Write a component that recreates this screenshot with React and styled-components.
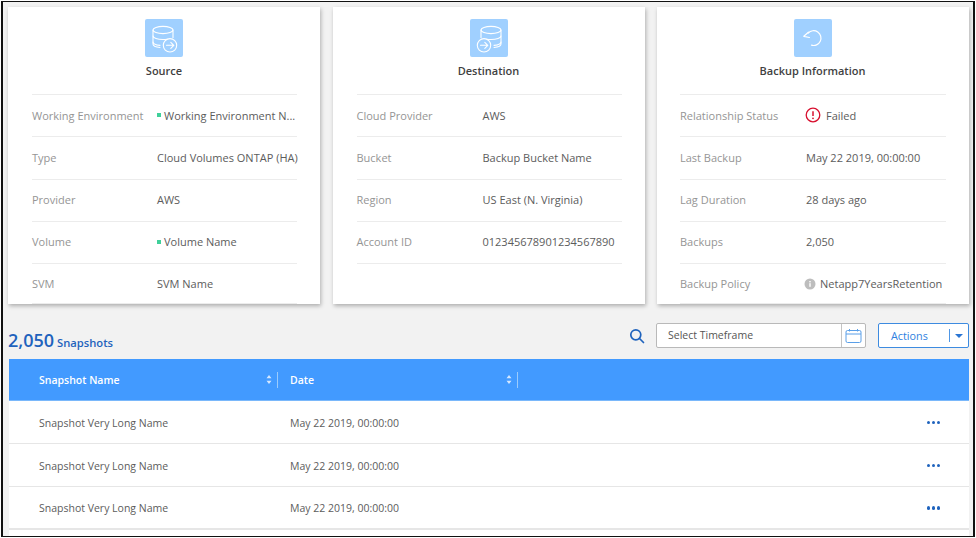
import React from 'react';
import styled, { createGlobalStyle } from 'styled-components';

const Global = createGlobalStyle`
  html, body { margin: 0; padding: 0; background: #fff; }
  * { box-sizing: border-box; }
`;

const Page = styled.div`
  width: 976px;
  height: 538px;
  padding: 1px;
  background: #fff;
  overflow: hidden;
  font-family: "Open Sans", "Liberation Sans", sans-serif;
`;

const Frame = styled.div`
  height: 536px;
  border: solid #111;
  border-width: 1px 2px 1px 2px;
  background: #f2f2f2;
  padding: 5px 4px 0 5px;
  overflow: hidden;
`;

const Cards = styled.div`
  display: grid;
  grid-template-columns: repeat(3, 312px);
  justify-content: space-between;
`;

const Card = styled.section`
  height: 297px;
  background: #fff;
  box-shadow: 1px 2px 4px rgba(0, 0, 0, 0.28);
  padding: 12px 24px 0 ${p => p.$pad}px;
  display: flex;
  flex-direction: column;
  align-items: stretch;
  overflow: hidden;
`;

const IconTile = styled.div`
  width: 38px;
  height: 38px;
  border-radius: 2px;
  background: #a0d0ff;
  align-self: center;
  display: flex;
  align-items: center;
  justify-content: center;
`;

const CardTitle = styled.h3`
  margin: 4px 0 0;
  height: 20px;
  line-height: 20px;
  font-size: 11px;
  font-weight: 600;
  color: #3f3f3f;
  text-align: center;
`;

const Rows = styled.div`
  margin: 13px -1px 0 0;
  border-top: 1px solid #ececec;
`;

const Row = styled.div`
  height: 42.25px;
  padding-bottom: 1px;
  display: grid;
  grid-template-columns: ${p => p.$labelWidth}px 1fr;
  align-items: center;
  border-bottom: 1px solid #ececec;
  font-size: 11px;
  &:nth-child(5) {
    height: 40px;
    padding-bottom: 0;
  }
`;

const Label = styled.span`
  color: #959595;
  white-space: nowrap;
`;

const Value = styled.span`
  color: #5c5c5c;
  white-space: nowrap;
  display: flex;
  align-items: center;
  min-width: 0;
`;

const Dot = styled.i`
  width: 4px;
  height: 4px;
  margin-right: 3px;
  flex: none;
  background: #3fd09a;
`;

const StatusGap = styled.span`
  display: flex;
  margin: 0 ${p => p.$gap}px 0 ${p => p.$shift}px;
  flex: none;
`;

const Toolbar = styled.div`
  height: 36px;
  margin-top: 19px;
  display: flex;
  align-items: flex-start;
`;

const Count = styled.div`
  margin-top: 4px;
  color: #1f63bd;
  font-size: 11.2px;
  font-weight: 600;
  line-height: 26px;
  white-space: nowrap;
`;

const CountNumber = styled.span`
  font-size: 18px;
  font-weight: 600;
  margin-right: 3px;
`;

const Controls = styled.div`
  margin-left: auto;
  display: flex;
  align-items: center;
`;

const SearchButton = styled.span`
  display: flex;
  margin-right: 11px;
`;

const Picker = styled.div`
  width: 210px;
  height: 25px;
  background: #fff;
  border: 1px solid #b9b9b9;
  border-radius: 2px;
  display: flex;
  align-items: center;
`;

const PickerText = styled.span`
  flex: 1;
  padding: 0 0 1px 11px;
  font-size: 10.5px;
  color: #555;
`;

const PickerIcon = styled.span`
  width: 24px;
  height: 100%;
  border-left: 1px solid #c4c4c4;
  display: flex;
  align-items: center;
  justify-content: center;
`;

const ActionsButton = styled.div`
  width: 91px;
  height: 25px;
  margin-left: 12px;
  background: #fff;
  border: 1px solid #3d8be0;
  border-radius: 2px;
  display: flex;
  align-items: center;
  color: #2f7fe0;
  font-size: 10.8px;
`;

const ActionsText = styled.span`
  flex: 1;
  padding: 0 0 1px 12px;
`;

const ActionsSep = styled.span`
  width: 1px;
  height: 13px;
  background: #4f97e6;
`;

const Caret = styled.span`
  margin: 0 5px 0 5px;
  width: 0;
  height: 0;
  border-left: 4px solid transparent;
  border-right: 4px solid transparent;
  border-top: 4px solid #2a75d3;
`;

const Table = styled.div`
  margin-left: 1px;
  background: #fff;
  height: 200px;
`;

const HeaderRow = styled.div`
  height: 42px;
  background: #429aff;
  border-bottom: 1px solid #7ab8fb;
  display: grid;
  grid-template-columns: 269px 240px 1fr;
  align-items: center;
  color: #fff;
  font-size: 10.5px;
`;

const HeaderCell = styled.div`
  height: 100%;
  display: flex;
  align-items: center;
  padding: ${p => p.$top}px 0 0 ${p => p.$pad}px;
  position: relative;
  font-weight: 600;
  &::after {
    content: '';
    position: absolute;
    right: 0;
    top: 13px;
    height: 16px;
    width: 1px;
    background: #9ccbfc;
  }
`;

const SortIcon = styled.svg`
  position: absolute;
  right: 6px;
  top: 16px;
`;

const BodyRow = styled.div`
  height: 43px;
  padding-top: 1px;
  display: grid;
  grid-template-columns: 269px 1fr 60px;
  align-items: center;
  border-bottom: 1px solid #e6e6e6;
  font-size: 10.5px;
  color: #5c5c5c;
  &:last-child {
    border-bottom-width: 2px;
  }
`;

const NameCell = styled.div`
  padding-left: 30px;
`;

const DateCell = styled.div`
  padding-left: 12px;
`;

const MoreCell = styled.div`
  display: flex;
  justify-content: flex-end;
  padding-right: 29px;
  gap: 1.5px;
`;

const MoreDot = styled.i`
  width: 3.5px;
  height: 3.5px;
  border-radius: 50%;
  background: #1f63bd;
`;

const DbIcon = ({ flip }) => (
  <svg width="38" height="38" viewBox="0 0 38 38" fill="none" stroke="#fff" strokeWidth="1.1" strokeLinecap="round" strokeLinejoin="round">
    <g transform={flip ? 'translate(39 0) scale(-1 1)' : undefined}>
      <ellipse cx="18" cy="11" rx="10" ry="3.600" />
      <path d="M8 11V25c0 1.900 3 3.100 7 3.500" />
      <path d="M28 11V18.500" />
      <path d="M8 17c0 2 4.500 3.500 10 3.500 1.500 0 2.800-.1 4-.3" />
      <path d="M8 23c0 1.800 3.200 3 7 3.400" />
    </g>
    <circle cx={flip ? 14 : 25} cy="26.300" r="6.700" />
    <path d={flip ? 'M10.500 26.300h7M14.800 23.300l3 3-3 3' : 'M21.500 26.300h7M25.800 23.300l3 3-3 3'} />
  </svg>
);

const RestoreIcon = () => (
  <svg width="38" height="38" viewBox="0 0 38 38" fill="none" stroke="#fff" strokeWidth="1.200" strokeLinecap="round" strokeLinejoin="round">
    <path d="M14.200 14A7.400 7.400 0 1 1 17.500 26.200" />
    <path d="M14.400 13.200L9.800 17.300L15.400 18.500" />
  </svg>
);

const FailedIcon = () => (
  <svg width="16" height="16" viewBox="0 0 16 16" fill="none">
    <circle cx="8" cy="8" r="6.800" stroke="#d8102f" strokeWidth="1.300" />
    <path d="M8 4.200v4.800" stroke="#d8102f" strokeWidth="1.500" />
    <circle cx="8" cy="11.300" r="0.900" fill="#d8102f" />
  </svg>
);

const InfoIcon = () => (
  <svg width="12" height="12" viewBox="0 0 12 12">
    <circle cx="6" cy="6" r="5.500" fill="#bdbdbd" />
    <rect x="5.300" y="5.200" width="1.400" height="3.600" fill="#fff" />
    <rect x="5.300" y="3" width="1.400" height="1.400" fill="#fff" />
  </svg>
);

const SearchIcon = () => (
  <svg width="16" height="16" viewBox="0 0 16 16" fill="none" stroke="#1f63bd" strokeWidth="1.700" strokeLinecap="round">
    <circle cx="6.800" cy="6.800" r="5" />
    <path d="M10.500 10.500L14.500 14.500" />
  </svg>
);

const CalendarIcon = () => (
  <svg width="17" height="16" viewBox="0 0 17 16" fill="none" stroke="#5a9fe8" strokeWidth="1">
    <rect x="1" y="2.500" width="15" height="12" rx="1.500" />
    <path d="M1 6h15M4.500 1v2.500M12.500 1v2.500" />
  </svg>
);

const Sort = () => (
  <SortIcon width="6" height="9" viewBox="0 0 6 9" fill="#d5e8ff">
    <path d="M3 0l2.500 3.200h-5zM3 9L.5 5.800h5z" />
  </SortIcon>
);

const cards = [
  {
    title: 'Source',
    pad: 24,
    labelWidth: 125,
    icon: <DbIcon />,
    rows: [
      ['Working Environment', <><Dot />Working Environment N...</>],
      ['Type', 'Cloud Volumes ONTAP (HA)'],
      ['Provider', 'AWS'],
      ['Volume', <><Dot />Volume Name</>],
      ['SVM', 'SVM Name'],
    ],
  },
  {
    title: 'Destination',
    pad: 24,
    labelWidth: 126,
    icon: <DbIcon flip />,
    rows: [
      ['Cloud Provider', 'AWS'],
      ['Bucket', 'Backup Bucket Name'],
      ['Region', 'US East (N. Virginia)'],
      ['Account ID', '012345678901234567890'],
    ],
  },
  {
    title: 'Backup Information',
    pad: 23,
    labelWidth: 126,
    icon: <RestoreIcon />,
    rows: [
      ['Relationship Status', <><StatusGap $shift={-1} $gap={5}><FailedIcon /></StatusGap>Failed</>],
      ['Last Backup', 'May 22 2019, 00:00:00'],
      ['Lag Duration', '28 days ago'],
      ['Backups', '2,050'],
      ['Backup Policy', <><StatusGap $shift={-2} $gap={4}><InfoIcon /></StatusGap>Netapp7YearsRetention</>],
    ],
  },
];

export default function App() {
  return (
    <Page>
      <Global />
      <Frame>
        <Cards>
          {cards.map(card => (
            <Card key={card.title} $pad={card.pad}>
              <IconTile>{card.icon}</IconTile>
              <CardTitle>{card.title}</CardTitle>
              <Rows>
                {card.rows.map(([label, value]) => (
                  <Row key={label} $labelWidth={card.labelWidth}>
                    <Label>{label}</Label>
                    <Value>{value}</Value>
                  </Row>
                ))}
              </Rows>
            </Card>
          ))}
        </Cards>
        <Toolbar>
          <Count><CountNumber>2,050</CountNumber>Snapshots</Count>
          <Controls>
            <SearchButton><SearchIcon /></SearchButton>
            <Picker>
              <PickerText>Select Timeframe</PickerText>
              <PickerIcon><CalendarIcon /></PickerIcon>
            </Picker>
            <ActionsButton>
              <ActionsText>Actions</ActionsText>
              <ActionsSep />
              <Caret />
            </ActionsButton>
          </Controls>
        </Toolbar>
        <Table>
          <HeaderRow>
            <HeaderCell $pad={30} $top={0}>Snapshot Name<Sort /></HeaderCell>
            <HeaderCell $pad={12} $top={1}>Date<Sort /></HeaderCell>
          </HeaderRow>
          {[0, 1, 2].map(i => (
            <BodyRow key={i}>
              <NameCell>Snapshot Very Long Name</NameCell>
              <DateCell>May 22 2019, 00:00:00</DateCell>
              <MoreCell><MoreDot /><MoreDot /><MoreDot /></MoreCell>
            </BodyRow>
          ))}
        </Table>
      </Frame>
    </Page>
  );
}
